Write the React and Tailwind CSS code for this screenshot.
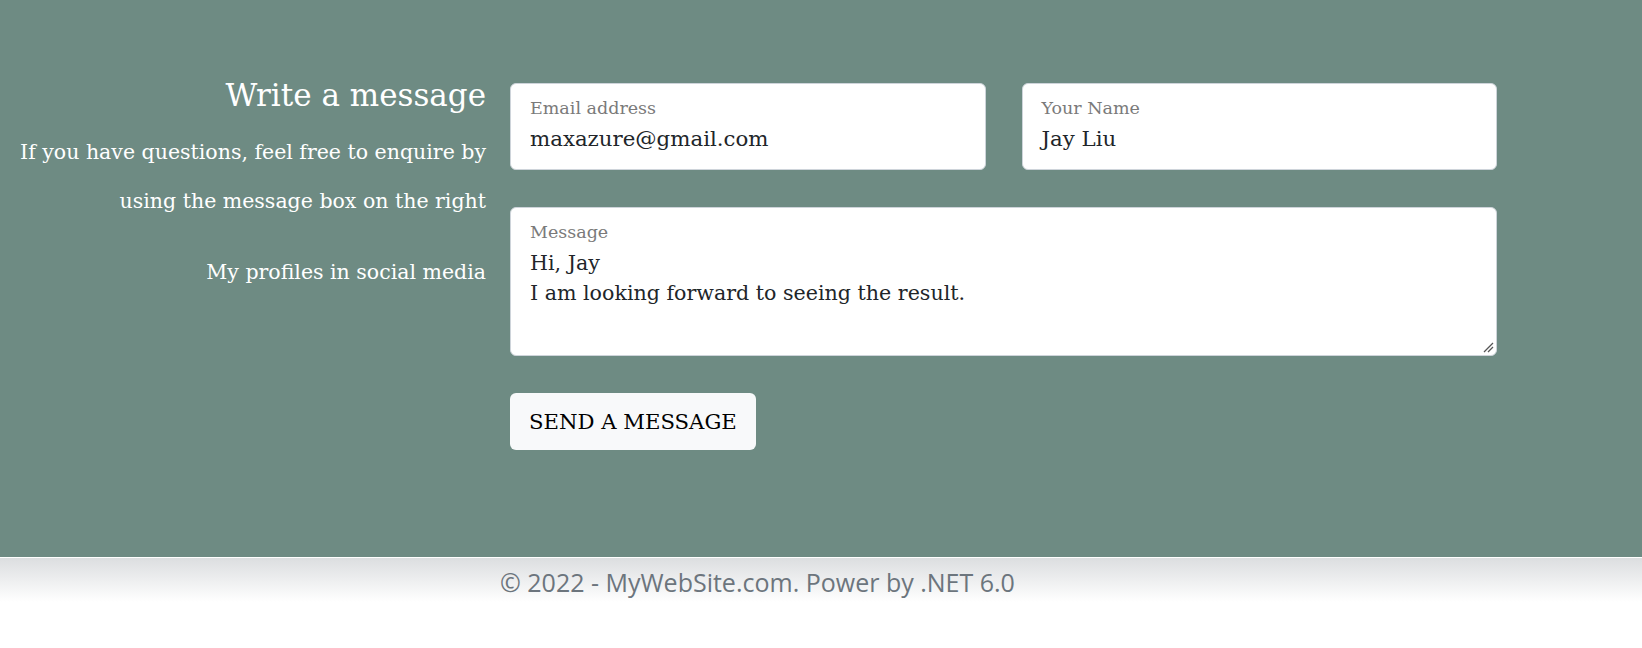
const serif = { fontFamily: '"DejaVu Serif", "Liberation Serif", serif' }

const Field = ({ label, value, className }) => (
    <div className={`flex flex-col bg-white border border-[#ced4da] rounded-md px-[19px] h-[87px] ${className || ''}`}>
        <span className="mt-[14px] text-[17.5px] leading-[20px] text-[#7a7a7a]">{label}</span>
        <span className="mt-[8px] text-[21.3px] leading-[26px] text-[#212529]">{value}</span>
    </div>
)

export default function App() {
    return (
        <div className="min-h-screen bg-white" style={serif}>
            <section className="bg-[#6e8b83] flex pt-[68px] pb-[107px]">
                <div className="w-[486px] flex flex-col items-end text-right text-white">
                    <h2 className="mt-[7px] text-[31px] leading-[40px] font-normal">Write a message</h2>
                    <p className="mt-[13px] text-[20.5px] leading-[49px]">
                        If you have questions, feel free to enquire by
                        <br />
                        using the message box on the right
                    </p>
                    <p className="mt-[22px] text-[20.5px] leading-[49px]">My profiles in social media</p>
                </div>

                <div className="ml-[24px] w-[987px] pt-[15px] flex flex-col">
                    <div className="flex gap-[36px]">
                        <Field className="flex-1" label="Email address" value="maxazure@gmail.com" />
                        <Field className="flex-1" label="Your Name" value="Jay Liu" />
                    </div>

                    <div className="relative mt-[37px] h-[149px] bg-white border border-[#ced4da] rounded-md px-[19px] flex flex-col">
                        <span className="mt-[14px] text-[17.5px] leading-[20px] text-[#7a7a7a]">Message</span>
                        <div className="mt-[6px] text-[20.6px] leading-[30px] text-[#212529]">
                            Hi, Jay
                            <br />
                            I am looking forward to seeing the result.
                        </div>
                        <svg className="absolute right-[2px] bottom-[2px]" width="12" height="12" viewBox="0 0 12 12">
                            <path d="M2 11 L11 2 M6 11 L11 6" stroke="#555" strokeWidth="1.3" />
                        </svg>
                    </div>

                    <div className="mt-[37px]">
                        <button className="h-[57px] px-[19px] bg-[#f8f9fa] rounded-md text-[21.2px] text-black">
                            SEND A MESSAGE
                        </button>
                    </div>
                </div>
            </section>

            <footer className="border-t border-white bg-gradient-to-b from-[#dcdee0] to-white h-[45px]">
                <div
                    className="pl-[500px] pt-[9px] text-[25px] leading-[30px] text-[#6c757d]"
                    style={{ fontFamily: '"Open Sans", "Noto Sans", sans-serif' }}
                >
                    © 2022 - MyWebSite.com. Power by .NET 6.0
                </div>
            </footer>
        </div>
    )
}
